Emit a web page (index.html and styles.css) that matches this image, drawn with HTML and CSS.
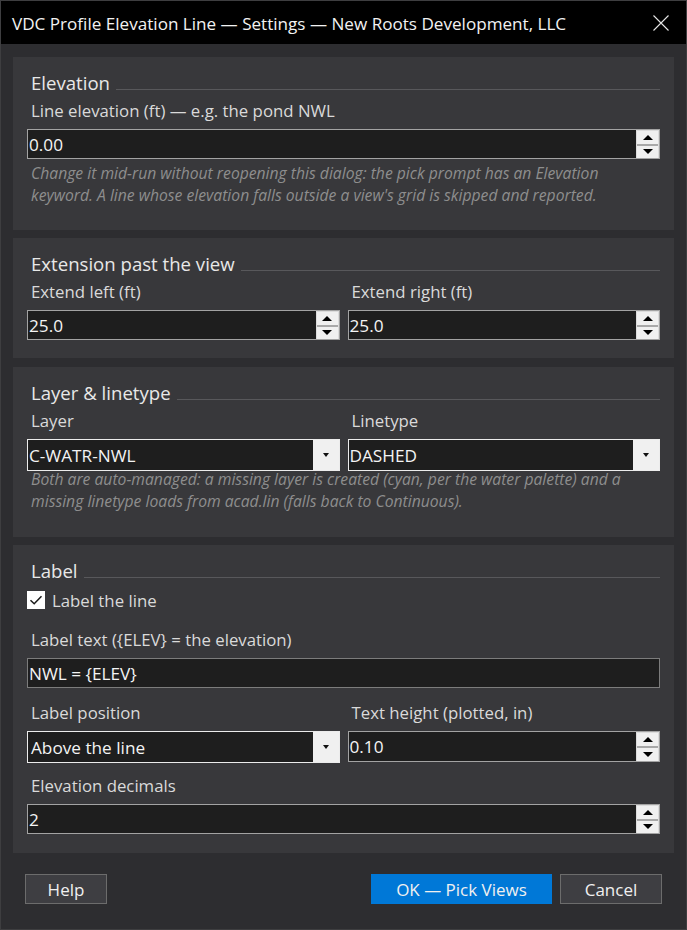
FILE: index.html
```html
<!DOCTYPE html>
<html lang="en">
<head>
<meta charset="utf-8">
<title>VDC Profile Elevation Line — Settings</title>
<link rel="stylesheet" href="styles.css">
</head>
<body>
<div class="window">
  <div class="titlebar">
    <span class="title">VDC Profile Elevation Line — Settings — New Roots Development, LLC</span>
    <svg class="close" width="16" height="16" viewBox="0 0 16 16"><path d="M0.5 0.5 L15.5 15.5 M15.5 0.5 L0.5 15.5" stroke="#e6e6e6" stroke-width="1.1" fill="none"/></svg>
  </div>
  <div class="content">
    <section class="group g1">
      <div class="group-head"><span>Elevation</span><i class="rule"></i></div>
      <div class="lbl">Line elevation (ft) — e.g. the pond NWL</div>
      <div class="field spin"><span class="val">0.00</span><span class="spinner"><span class="sb"><i class="up"></i></span><span class="div"></span><span class="sb"><i class="down"></i></span></span></div>
      <p class="hint h1">Change it mid-run without reopening this dialog: the pick prompt has an Elevation<br>keyword. A line whose elevation falls outside a view's grid is skipped and reported.</p>
    </section>

    <section class="group g2">
      <div class="group-head"><span>Extension past the view</span><i class="rule"></i></div>
      <div class="cols">
        <div class="col">
          <div class="lbl">Extend left (ft)</div>
          <div class="field spin"><span class="val">25.0</span><span class="spinner"><span class="sb"><i class="up"></i></span><span class="div"></span><span class="sb"><i class="down"></i></span></span></div>
        </div>
        <div class="col">
          <div class="lbl">Extend right (ft)</div>
          <div class="field spin"><span class="val">25.0</span><span class="spinner"><span class="sb"><i class="up"></i></span><span class="div"></span><span class="sb"><i class="down"></i></span></span></div>
        </div>
      </div>
    </section>

    <section class="group g3">
      <div class="group-head"><span>Layer &amp; linetype</span><i class="rule"></i></div>
      <div class="cols">
        <div class="col">
          <div class="lbl">Layer</div>
          <div class="combo"><span class="val">C-WATR-NWL</span><span class="drop"><i class="tri"></i></span></div>
        </div>
        <div class="col">
          <div class="lbl">Linetype</div>
          <div class="combo"><span class="val">DASHED</span><span class="drop"><i class="tri"></i></span></div>
        </div>
      </div>
      <p class="hint h3">Both are auto-managed: a missing layer is created (cyan, per the water palette) and a<br>missing linetype loads from acad.lin (falls back to Continuous).</p>
    </section>

    <section class="group g4">
      <div class="group-head"><span>Label</span><i class="rule"></i></div>
      <div class="check">
        <span class="box"><svg width="18" height="18" viewBox="0 0 18 18"><path d="M3.5 9.2 L7.2 12.8 L14.5 5.2" stroke="#1a1a1a" stroke-width="1.5" fill="none"/></svg></span>
        <span class="check-text">Label the line</span>
      </div>
      <div class="lbl lt">Label text ({ELEV} = the elevation)</div>
      <div class="field plain"><span class="val">NWL = {ELEV}</span></div>
      <div class="cols lp">
        <div class="col">
          <div class="lbl">Label position</div>
          <div class="combo"><span class="val pad3">Above the line</span><span class="drop"><i class="tri"></i></span></div>
        </div>
        <div class="col">
          <div class="lbl">Text height (plotted, in)</div>
          <div class="field spin h31"><span class="val">0.10</span><span class="spinner"><span class="sb"><i class="up"></i></span><span class="div"></span><span class="sb"><i class="down"></i></span></span></div>
        </div>
      </div>
      <div class="lbl ed">Elevation decimals</div>
      <div class="field spin"><span class="val">2</span><span class="spinner"><span class="sb"><i class="up"></i></span><span class="div"></span><span class="sb"><i class="down"></i></span></span></div>
    </section>
  </div>
  <div class="footer">
    <button class="btn help">Help</button>
    <span class="spacer"></span>
    <button class="btn primary">OK — Pick Views</button>
    <button class="btn cancel">Cancel</button>
  </div>
</div>
</body>
</html>
```

FILE: styles.css
```css
* { box-sizing: border-box; }
html, body { margin: 0; padding: 0; background: #2d2d30; }
body { font-family: "Open Sans", "Noto Sans", sans-serif; color: #dcdcdc; }

.window {
  width: 687px;
  height: 930px;
  background: #2d2d30;
  border: 1px solid #3e3e40;
  display: flex;
  flex-direction: column;
}

.titlebar {
  height: 43px;
  background: #000;
  display: flex;
  align-items: center;
  padding-left: 11px;
  padding-right: 17px;
  flex: none;
}
.title {
  flex: 1;
  color: #f2f2f2;
  font-size: 17.1px;
  white-space: nowrap;
  padding-top: 1px;
}
.close { display: block; }

.content {
  padding: 13px 12px 0 12px;
  display: flex;
  flex-direction: column;
  gap: 8px;
}

.group {
  background: #38383b;
  padding: 13px 14px 0 14px;
}
.g1 { height: 173px; }
.g2 { height: 120px; }
.g3 { height: 170px; margin-top: 1px; }
.g4 { height: 308px; }

.group-head {
  display: flex;
  height: 26px;
  align-items: flex-start;
}
.group-head span {
  font-size: 18.6px;
  line-height: 26px;
  color: #e8e8e8;
  padding-left: 4px;
  white-space: nowrap;
}
.rule {
  flex: 1;
  height: 1px;
  background: #58585b;
  margin-top: 19px;
  margin-left: 6px;
}

.lbl {
  font-size: 16.8px;
  line-height: 20px;
  height: 20px;
  padding-left: 4px;
  margin-top: 5px;
  margin-bottom: 8px;
  color: #dadada;
  white-space: nowrap;
}

.cols {
  display: grid;
  grid-template-columns: 1fr 1fr;
  column-gap: 8px;
  align-items: start;
}

.field, .combo {
  display: flex;
  align-items: stretch;
  background: #1e1e1e;
  font-size: 17.2px;
  color: #f4f4f4;
}
.field { height: 30px; border: 1px solid #a3a3a3; }
.field.h31 { height: 31px; }
.field.plain { border-color: #7c7c7c; }
.combo { height: 32px; border: 1px solid #ececec; }

.val {
  flex: 1;
  display: flex;
  align-items: center;
  padding-left: 1px;
  white-space: nowrap;
}
.val.pad3 { padding-left: 3px; }

.spinner {
  width: 23px;
  display: flex;
  flex-direction: column;
  background: #dcdcdc;
  padding: 1px 1px 0 1px;
}
.sb {
  flex: 1;
  background: #f0f0f0;
  display: flex;
  align-items: center;
  justify-content: center;
}
.spinner .div { height: 2px; background: #a8a8a8; flex: none; }
.up {
  width: 0; height: 0;
  border-left: 5px solid transparent;
  border-right: 5px solid transparent;
  border-bottom: 5px solid #000;
}
.down {
  width: 0; height: 0;
  border-left: 5px solid transparent;
  border-right: 5px solid transparent;
  border-top: 5px solid #000;
}

.drop {
  width: 26px;
  background: #f0f0f0;
  display: flex;
  align-items: center;
  justify-content: center;
}
.tri {
  width: 0; height: 0;
  border-left: 3.5px solid transparent;
  border-right: 3.5px solid transparent;
  border-top: 4px solid #111;
}

.hint {
  margin: 0;
  font-size: 15.7px;
  font-style: italic;
  line-height: 22px;
  color: #8e8e8e;
  padding-left: 4px;
  white-space: nowrap;
}
.h1 { margin-top: 3px; }
.h3 { margin-top: -3px; }

.check {
  display: flex;
  align-items: center;
  height: 18px;
  margin-top: 7px;
}
.box {
  width: 18px;
  height: 18px;
  background: #fff;
  display: block;
}
.box svg { display: block; }
.check-text {
  margin-left: 7px;
  font-size: 16.8px;
  color: #dadada;
}
.lbl.lt { margin-top: 21px; }
.lp { margin-top: 10px; }
.lbl.ed { margin-top: 13px; }

.footer {
  display: flex;
  align-items: flex-start;
  padding: 21px 24px 0 24px;
  gap: 8px;
}
.spacer { flex: 1; }
.btn {
  height: 30px;
  font-family: "Open Sans", "Noto Sans", sans-serif;
  font-size: 17px;
  color: #f0f0f0;
  background: #3e3e42;
  border: 1px solid #6c6c6c;
  padding: 0;
  margin: 0;
}
.help { width: 82px; }
.primary { width: 181px; background: #0078d7; border-color: #0078d7; }
.cancel { width: 102px; }
```
